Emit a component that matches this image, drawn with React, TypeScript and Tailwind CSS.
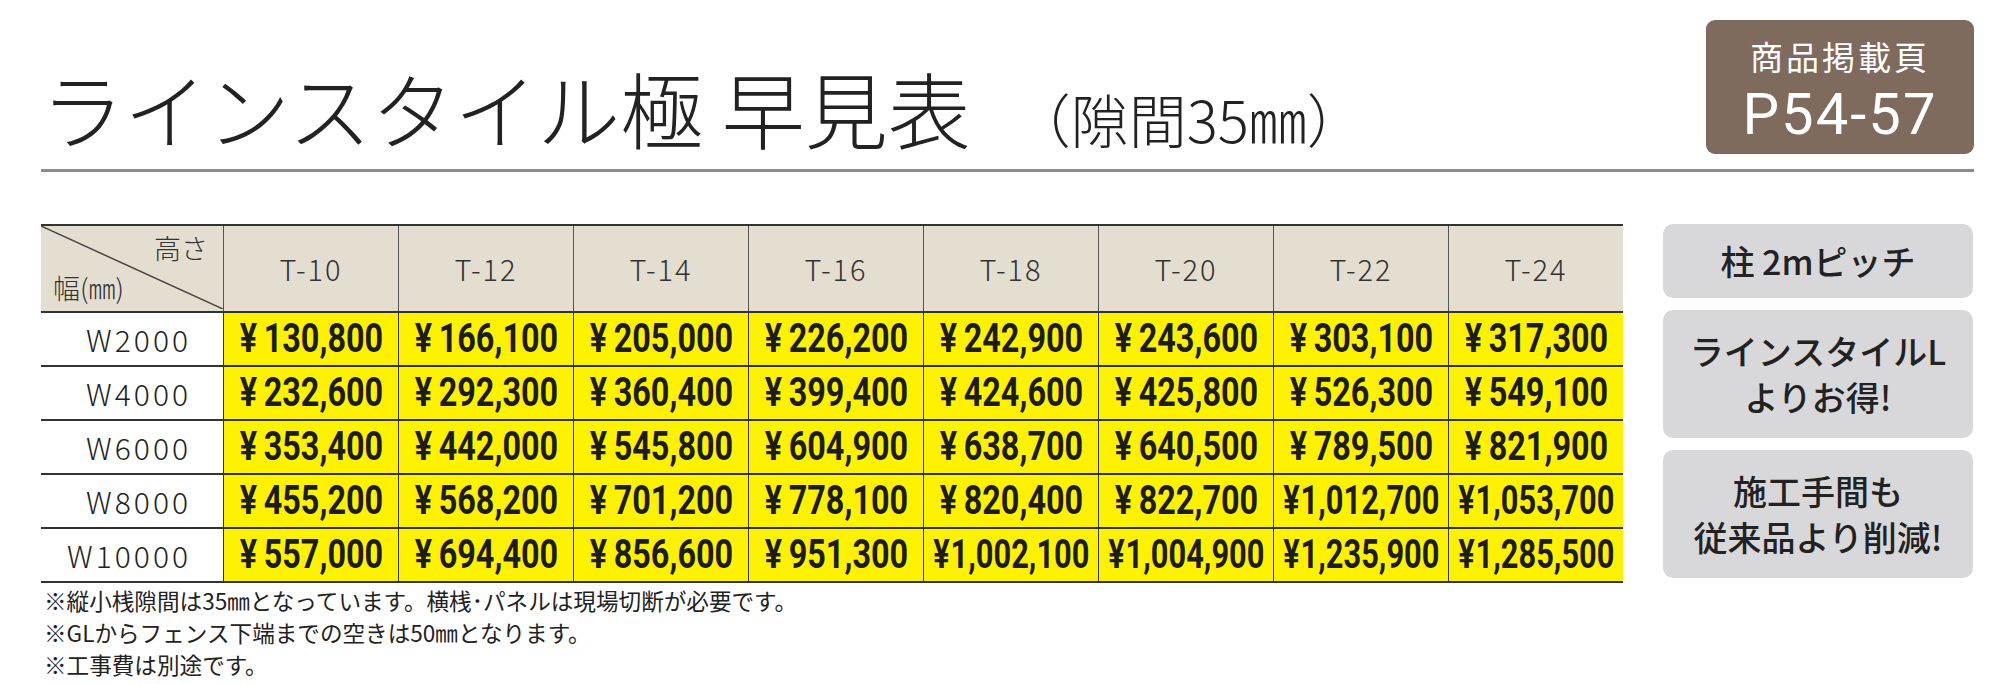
import React from "react";

const cols = ["T-10", "T-12", "T-14", "T-16", "T-18", "T-20", "T-22", "T-24"];

const rows = [
  { w: "W2000", p: ["130,800", "166,100", "205,000", "226,200", "242,900", "243,600", "303,100", "317,300"] },
  { w: "W4000", p: ["232,600", "292,300", "360,400", "399,400", "424,600", "425,800", "526,300", "549,100"] },
  { w: "W6000", p: ["353,400", "442,000", "545,800", "604,900", "638,700", "640,500", "789,500", "821,900"] },
  { w: "W8000", p: ["455,200", "568,200", "701,200", "778,100", "820,400", "822,700", "1,012,700", "1,053,700"] },
  { w: "W10000", p: ["557,000", "694,400", "856,600", "951,300", "1,002,100", "1,004,900", "1,235,900", "1,285,500"] },
];

function Price({ v }: { v: string }) {
  const long = v.length > 7;
  return (
    <div className="flex items-center justify-center h-full bg-[#fff200] border-l border-[#333] overflow-hidden">
      <span
        className={
          "inline-flex whitespace-nowrap font-['Roboto',sans-serif] font-bold text-[40px] text-[#1c1c1c] leading-none origin-center " +
          (long ? "scale-x-[0.77]" : "scale-x-[0.81]")
        }
      >
        <span className={long ? "mr-[1px]" : "mr-[8px]"}>¥</span>
        {v}
      </span>
    </div>
  );
}

export default function App() {
  return (
    <div className="w-[1999px] h-[684px] bg-white pl-[41px] pr-[25px] font-['Noto_Sans_CJK_JP',sans-serif] text-[#222]">
      {/* header */}
      <div className="flex justify-between h-[169px]">
        <div className="flex items-baseline pt-[66px]">
          <h1 className="text-[83px] font-light leading-none">ラインスタイル極 早見表</h1>
          <span className="ml-[42px] text-[58px] font-light leading-none">（隙間35㎜）</span>
        </div>
        <div className="mt-[20px] h-[134px] w-[268px] rounded-[9px] bg-[#7f6a5e] text-white flex flex-col items-center pt-[18px]">
          <div className="text-[33px] tracking-[3px] leading-[36px]">商品掲載頁</div>
          <div className="mt-[11px] font-['Roboto',sans-serif] text-[58px] tracking-[2px] leading-[58px]">P54-57</div>
        </div>
      </div>
      <div className="h-[3px] bg-[#8c8c8c]" />

      {/* table + notes */}
      <div className="flex mt-[52px] gap-[40px]">
        <div>
          <div className="border-t-2 border-b-2 border-[#333] w-[1582px]">
            <div className="grid grid-cols-[182px_repeat(8,175px)] h-[85px] bg-[#e4ded0]">
              <div className="relative">
                <svg className="absolute inset-0" width="182" height="83" viewBox="0 0 182 83">
                  <line x1="0" y1="0" x2="182" y2="83" stroke="#444" strokeWidth="1.5" />
                </svg>
                <div className="absolute right-[15px] top-[8px] text-[27px] font-light leading-none text-[#333]">高さ</div>
                <div className="absolute left-[12px] bottom-[10px] text-[27px] font-light leading-none text-[#333]">幅(㎜)</div>
              </div>
              {cols.map((c) => (
                <div key={c} className="flex items-center justify-center border-l border-[#555] text-[29px] tracking-[2px] font-light text-[#333]">
                  {c}
                </div>
              ))}
            </div>
            {rows.map((r) => (
              <div key={r.w} className="grid grid-cols-[182px_repeat(8,175px)] h-[54px] border-t-2 border-[#333]">
                <div className="flex items-center justify-end pr-[32px] text-[30px] tracking-[3px] font-light text-[#222]">{r.w}</div>
                {r.p.map((v, i) => (
                  <Price key={i} v={v} />
                ))}
              </div>
            ))}
          </div>
          <div className="pl-[3px] pt-[2px] text-[22.6px] leading-[32px] text-[#222]">
            <p>※縦小桟隙間は35㎜となっています。横桟･パネルは現場切断が必要です。</p>
            <p>※GLからフェンス下端までの空きは50㎜となります。</p>
            <p>※工事費は別途です。</p>
          </div>
        </div>

        <div className="flex flex-col gap-[12px] w-[310px] text-[34px] font-medium text-[#222] leading-[46px] text-center">
          <div className="h-[74px] rounded-[10px] bg-[#d8d8da] flex items-center justify-center">柱 2mピッチ</div>
          <div className="h-[128px] rounded-[10px] bg-[#d8d8da] flex flex-col items-center justify-center">
            <span>ラインスタイルL</span>
            <span>よりお得!</span>
          </div>
          <div className="h-[128px] rounded-[10px] bg-[#d8d8da] flex flex-col items-center justify-center">
            <span>施工手間も</span>
            <span>従来品より削減!</span>
          </div>
        </div>
      </div>
    </div>
  );
}
